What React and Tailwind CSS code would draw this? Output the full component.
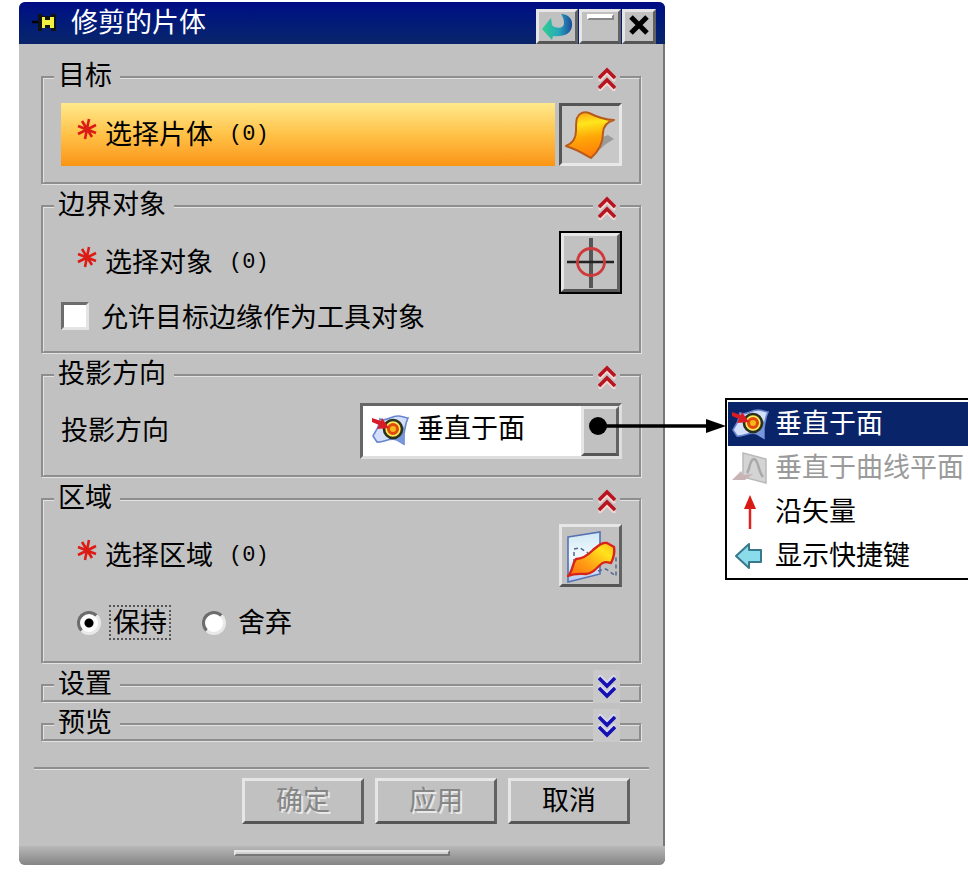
import { useState } from "react";

const bevel =
  "border-[3px] border-t-[#e6e6e6] border-l-[#e6e6e6] border-r-[#626262] border-b-[#565656] bg-[#c1c1c1]";

function Chevrons({ down }) {
  return (
    <svg
      viewBox="0 0 18 24"
      className={down ? "h-6 w-[18px] rotate-180" : "mt-1 h-6 w-[18px]"}
      fill="none"
      aria-hidden="true"
    >
      <path d="M1 14 9 6l8 8M1 24l8-8 8 8" stroke={down ? "#d8d8f0" : "#f6d6d2"} strokeWidth="3" />
      <path d="M1 11 9 3l8 8M1 21l8-8 8 8" stroke={down ? "#1410b4" : "#b81420"} strokeWidth="3.500" />
    </svg>
  );
}

function Group({ title, collapsed, children }) {
  return (
    <fieldset className="min-w-0 border-[3px] border-[#e2e2e2] pr-[19px] pl-[10px] [border-style:groove]">
      <legend className="flex h-[30px] w-full items-center p-0">
        <span className="px-1 pb-[6px] leading-[24px]">{title}</span>
        <span className="ml-1 flex-1 border-t-[3px] border-[#e2e2e2] [border-style:groove_none_none]" />
        <button
          type="button"
          aria-label={title}
          aria-expanded={!collapsed}
          className={
            collapsed
              ? "-mb-[3px] flex h-[33px] w-[27px] items-center justify-center self-start bg-[#c9c9c9]"
              : "flex h-[30px] w-[27px] items-center justify-center"
          }
        >
          <Chevrons down={collapsed} />
        </button>
      </legend>
      {children}
    </fieldset>
  );
}

function SelectionLabel({ children }) {
  return (
    <span className="flex items-center pl-4">
      <svg viewBox="0 0 20 22" className="mb-3 h-[22px] w-5" aria-hidden="true">
        <path
          d="M12 1 8 21M1 8l18 7M1 16 19 7M5 3l10 16"
          stroke="#dc1c14"
          strokeWidth="2.600"
          fill="none"
        />
      </svg>
      <span className="ml-2 pb-1">{children}</span>
      <span className="ml-4 font-['Liberation_Mono',monospace] text-[22px]">(0)</span>
    </span>
  );
}

function SheetIcon() {
  return (
    <svg viewBox="0 0 54 54" className="size-[54px]" aria-hidden="true">
      <defs>
        <linearGradient id="sheet" x1="0.300" y1="0" x2="0.450" y2="1">
          <stop offset="0" stopColor="#ffa414" />
          <stop offset="0.250" stopColor="#ffe61c" />
          <stop offset="0.550" stopColor="#ffa808" />
          <stop offset="1" stopColor="#ff7a08" />
        </linearGradient>
      </defs>
      <path d="m36 30 8-3 6 4-8 5-8 7Z" fill="#9b9b9b" />
      <path
        d="M13 10c2-5 7-7 12-5 8 4 16 7 25 7-7 2-11 6-11 13 0 11-4 18-12 25-7-4-15-9-25-12 7-3 10-8 10-15 0-5 0-10 1-13Z"
        fill="url(#sheet)"
        stroke="#b85a1c"
        strokeWidth="2"
        strokeLinejoin="round"
      />
    </svg>
  );
}

function CrosshairIcon() {
  return (
    <svg viewBox="0 0 50 50" className="size-[50px]" fill="none" aria-hidden="true">
      <path d="M25 0v50" stroke="#555" strokeWidth="4" />
      <path d="M1 24h47" stroke="#222" strokeWidth="2.500" />
      <circle cx="25" cy="24" r="13.500" stroke="#d0393b" strokeWidth="2.800" />
    </svg>
  );
}

function RegionIcon() {
  return (
    <svg viewBox="0 0 54 54" className="size-[54px]" aria-hidden="true">
      <defs>
        <linearGradient id="pane" x1="0" y1="0" x2="0" y2="1">
          <stop offset="0" stopColor="#cfe8f4" />
          <stop offset="0.500" stopColor="#f2fbff" />
          <stop offset="1" stopColor="#b3c9f0" />
        </linearGradient>
        <linearGradient id="ribbon" x1="1" y1="0" x2="0" y2="1">
          <stop offset="0" stopColor="#ffb81c" />
          <stop offset="0.250" stopColor="#ffe31c" />
          <stop offset="0.600" stopColor="#ffa014" />
          <stop offset="1" stopColor="#ff6c10" />
        </linearGradient>
      </defs>
      <path d="M4 8 36 3v42L4 53Z" fill="url(#pane)" stroke="#5570b4" strokeWidth="1.600" />
      <path d="M10 34V20l6-1 8 5M34 42l8-2 10 7V27" fill="none" stroke="#52688e" strokeWidth="1.500" strokeDasharray="4 3" />
      <path
        d="M4 47c5-5 4-12 8-17 7 0 12-4 17-9 5-4 9-8 14-7l7 4c1 6-1 12-3 16-4-1-7-2-11 2-5 5-9 9-14 9-6 0-11-1-18 2Z"
        fill="url(#ribbon)"
        stroke="#d82418"
        strokeWidth="2.400"
        strokeLinejoin="round"
      />
    </svg>
  );
}

function NormalToFaceIcon() {
  return (
    <svg viewBox="0 0 38 32" className="h-8 w-[38px]" aria-hidden="true">
      <path
        d="M9 5c6 3 10-3 18-3 4 0 7 2 10 2-3 6-3 11-4 16v10l-7-4c-7-3-14 3-20 2l-4-6c3-6 7-10 7-17Z"
        fill="#d3dffb"
        stroke="#6785cf"
        strokeWidth="1.600"
      />
      <path d="M33 12c1 6-1 11 0 19l-9-6Z" fill="#7796dc" />
      <circle cx="22" cy="15" r="9" fill="#fbe95a" stroke="#2b3018" strokeWidth="2.600" />
      <circle cx="22" cy="15" r="4.500" fill="#f7b81c" stroke="#e0480c" strokeWidth="3" />
      <path d="m1 4 9 3 1-3 7 10-12 1 2-4-7-3Z" fill="#d81b25" />
    </svg>
  );
}

function NormalToCurvePlaneIcon() {
  return (
    <svg viewBox="0 0 38 34" className="h-[34px] w-[38px]" aria-hidden="true">
      <path d="m12 2 23 6v24l-23-6Z" fill="#d4d4d4" stroke="#b9b9b9" strokeWidth="1.500" />
      <path d="M16 22c3-3 2-13 7-14 5 1 3 10 9 18" fill="none" stroke="#a9a9a9" strokeWidth="2.500" />
      <path d="m1 29 9-9 2 4 10-1-8 6Z" fill="#c8b4b4" />
    </svg>
  );
}

function VectorIcon() {
  return (
    <svg viewBox="0 0 38 36" className="h-9 w-[38px]" aria-hidden="true">
      <path d="m19 1 6 14H13Z" fill="#d91a12" />
      <path d="M19 14v21" stroke="#dc2420" strokeWidth="2.500" />
    </svg>
  );
}

function BackArrowIcon() {
  return (
    <svg viewBox="0 0 38 28" className="h-7 w-[38px]" aria-hidden="true">
      <path
        d="M5 14 18 2v6h12v12H18v6Z"
        fill="#8bdcea"
        stroke="#38788c"
        strokeWidth="2"
        strokeLinejoin="round"
      />
    </svg>
  );
}

const directions = [
  { label: "垂直于面", Icon: NormalToFaceIcon, tone: "bg-[#0a246a] text-white" },
  { label: "垂直于曲线平面", Icon: NormalToCurvePlaneIcon, tone: "text-[#9a9a9a]", disabled: true },
  { label: "沿矢量", Icon: VectorIcon, tone: "text-black" },
  { label: "显示快捷键", Icon: BackArrowIcon, tone: "text-black" },
];

function TitleBar() {
  return (
    <header className="flex h-[42px] shrink-0 items-center bg-linear-to-b from-[#000a86] to-[#0a246a] pr-[9px] pl-3 text-white">
      <svg viewBox="0 0 26 18" className="h-[18px] w-[26px]" aria-hidden="true">
        <path d="M1 8h9" stroke="#000" strokeWidth="2.500" />
        <path d="M7 0h4v2h9V0h5v17h-5v-3h-9v3H7Z" fill="#111" />
        <path d="M11 3h3v3h5V3h4v11h-4v-3h-5v3h-3Z" fill="#f0ee42" />
      </svg>
      <h1 className="ml-[14px] flex-1 pb-[4px] leading-[36px]">修剪的片体</h1>
      <div className="flex h-[35px] gap-px self-end">
        <button type="button" aria-label="重置" className={`${bevel} flex w-[42px] items-center justify-center`}>
          <svg viewBox="0 0 32 28" className="h-7 w-8" aria-hidden="true">
            <defs>
              <linearGradient id="reset" x1="0" y1="0" x2="1" y2="0">
                <stop offset="0" stopColor="#2fcf8e" />
                <stop offset="0.550" stopColor="#27a8ba" />
                <stop offset="1" stopColor="#1c4a9a" />
              </linearGradient>
            </defs>
            <path
              d="M20 1c8 0 12 6 11 12-1 8-8 11-19 10l-1 4L1 16 10 5l1 7c3 4 12 4 12-2 0-3-1-6-3-9Z"
              fill="url(#reset)"
            />
          </svg>
        </button>
        <button type="button" aria-label="最小化" className={`${bevel} flex w-[42px] justify-center pt-[2px]`}>
          <span className="h-[6px] w-[27px] border-2 border-t-white border-r-[#888] border-b-[#888] border-l-white bg-white" />
        </button>
        <button type="button" aria-label="关闭" className={`${bevel} flex w-[34px] items-center justify-center pb-1`}>
          <svg viewBox="0 0 20 20" className="size-5" aria-hidden="true">
            <path d="m2 2 16 16M18 2 2 18" stroke="#000" strokeWidth="5" />
          </svg>
        </button>
      </div>
    </header>
  );
}

function RegionRadio({ value, current, onChange }) {
  const checked = value === current;
  return (
    <label className="flex items-center">
      <input
        type="radio"
        name="region"
        value={value}
        checked={checked}
        onChange={() => onChange(value)}
        className="size-6 appearance-none rounded-full border-[3px] border-t-[#6c6c6c] border-r-[#e8e8e8] border-b-[#e8e8e8] border-l-[#6c6c6c] bg-white checked:bg-[radial-gradient(circle,#000_4px,#fff_5px)]"
      />
      <span
        className={
          checked
            ? "ml-2 border-2 border-dotted border-[#555] px-[2px] pb-[4px] leading-[27px]"
            : "ml-2 border-2 border-transparent px-[2px] pb-[4px] leading-[27px]"
        }
      >
        {value}
      </span>
    </label>
  );
}

export default function App() {
  const [region, setRegion] = useState("保持");
  const [edges, setEdges] = useState(false);

  return (
    <main className="flex min-h-screen items-start overflow-hidden bg-white pt-[2px] pl-[19px] font-['Noto_Sans_CJK_SC',sans-serif] text-[27px] leading-[36px] text-black">
      <form
        className="flex min-w-0 flex-1 flex-col rounded-t-[6px] rounded-b-[6px] border-r-2 border-[#777] bg-[#c1c1c1]"
        onSubmit={(event) => event.preventDefault()}
      >
        <div className="-mr-[2px] overflow-hidden rounded-t-[6px]">
          <TitleBar />
        </div>

        <div className="flex flex-col gap-[6px] pt-[18px] pr-[21px] pl-[22px]">
          <Group title="目标">
            <div className="-mr-[2px] flex gap-1 pt-[11px] pb-[16px] pl-[7px]">
              <div className="flex h-[63px] flex-1 items-center bg-linear-to-b from-[#ffe98a] via-[#ffc246] to-[#fa9410]">
                <SelectionLabel>选择片体</SelectionLabel>
              </div>
              <button
                type="button"
                aria-label="选择片体"
                className="flex h-[63px] w-[63px] items-center justify-center border-[3px] border-t-[#555] border-r-[#e8e8e8] border-b-[#e8e8e8] border-l-[#555] bg-[#c8c8c8]"
              >
                <SheetIcon />
              </button>
            </div>
          </Group>

          <Group title="边界对象">
            <div className="-mr-[2px] pt-[10px] pb-[17px] pl-[7px]">
              <div className="flex h-[63px] items-center justify-between">
                <SelectionLabel>选择对象</SelectionLabel>
                <button type="button" aria-label="选择对象" className="size-[63px] border-2 border-black">
                  <span className={`${bevel} flex size-full items-center justify-center`}>
                    <CrosshairIcon />
                  </span>
                </button>
              </div>
              <label className="mt-[4px] flex items-center gap-3">
                <input
                  type="checkbox"
                  checked={edges}
                  onChange={(event) => setEdges(event.target.checked)}
                  className="size-7 appearance-none border-[3px] border-t-[#6c6c6c] border-r-[#e4e4e4] border-b-[#e4e4e4] border-l-[#6c6c6c] bg-white checked:bg-black"
                />
                允许目标边缘作为工具对象
              </label>
            </div>
          </Group>

          <Group title="投影方向">
            <div className="-mr-[2px] flex items-center justify-between pt-[13px] pb-[16px] pl-[7px]">
              <label htmlFor="direction" className="pb-1">投影方向</label>
              <div className="relative h-[56px] w-[262px] border-[3px] border-t-[#666] border-r-[#dedede] border-b-[#dedede] border-l-[#666] bg-white">
                <select
                  id="direction"
                  defaultValue="垂直于面"
                  className="h-full w-full appearance-none bg-transparent pb-[8px] pl-[54px] text-[27px] outline-none"
                >
                  {directions.slice(0, 3).map(({ label, disabled }) => (
                    <option key={label} disabled={disabled}>
                      {label}
                    </option>
                  ))}
                </select>
                <span className="pointer-events-none absolute top-[8px] left-[8px]">
                  <NormalToFaceIcon />
                </span>
                <span className={`${bevel} pointer-events-none absolute inset-y-0 right-0 w-[38px]`} />
                <svg
                  viewBox="0 0 140 20"
                  className="pointer-events-none absolute top-[10px] left-[225px] z-10 h-5 w-[140px] max-w-none"
                  aria-hidden="true"
                >
                  <circle cx="10" cy="10" r="9" />
                  <path d="M10 10h115" stroke="#000" strokeWidth="3.500" />
                  <path d="m118 3 20 7-20 7Z" />
                </svg>
              </div>
            </div>
          </Group>

          <Group title="区域">
            <div className="-mr-[2px] pt-[10px] pb-[21px] pl-[7px]">
              <div className="flex h-[63px] items-center justify-between">
                <SelectionLabel>选择区域</SelectionLabel>
                <button type="button" aria-label="选择区域" className={`${bevel} flex size-[63px] items-center justify-center`}>
                  <RegionIcon />
                </button>
              </div>
              <div className="flex gap-[31px] pt-[18px] pl-4">
                <RegionRadio value="保持" current={region} onChange={setRegion} />
                <RegionRadio value="舍弃" current={region} onChange={setRegion} />
              </div>
            </div>
          </Group>

          <Group title="设置" collapsed />
          <Group title="预览" collapsed />
        </div>

        <hr className="mt-[25px] mr-[14px] ml-[15px] border-0 border-t-[3px] border-[#e2e2e2] [border-style:groove_none_none]" />

        <div className="mt-2 mr-[33px] flex justify-end gap-[11px]">
          {["确定", "应用"].map((label) => (
            <button
              key={label}
              type="button"
              disabled
              className={`${bevel} h-[46px] w-[122px] text-[#868686] [text-shadow:2px_2px_0_#e8e8e8]`}
            >
              <span className="block pb-[4px] leading-[34px]">{label}</span>
            </button>
          ))}
          <button type="button" className={`${bevel} h-[46px] w-[122px]`}>
            <span className="block pb-[4px] leading-[34px]">取消</span>
          </button>
        </div>

        <div className="mt-[22px] -mr-[2px] flex h-[19px] items-start justify-center rounded-b-[6px] bg-linear-to-b from-[#b8b8b8] to-[#858585] pt-1">
          <span className="h-[6px] w-1/3 border-2 border-t-[#e6e6e6] border-r-[#777] border-b-[#777] border-l-[#e6e6e6] bg-[#d0d0d0]" />
        </div>
      </form>

      <ul
        role="menu"
        className="mt-[396px] ml-[60px] w-[243px] shrink-0 border-y-2 border-l-2 border-black bg-white pt-[2px] pl-px"
      >
        {directions.map(({ label, Icon, tone, disabled }) => (
          <li key={label} role="none">
            <button
              type="button"
              role="menuitem"
              disabled={disabled}
              className={`${tone} flex h-11 w-full items-center gap-[6px] pl-[3px] whitespace-nowrap`}
            >
              <Icon />
              <span className="pb-[5px] leading-[35px]">{label}</span>
            </button>
          </li>
        ))}
      </ul>
    </main>
  );
}
